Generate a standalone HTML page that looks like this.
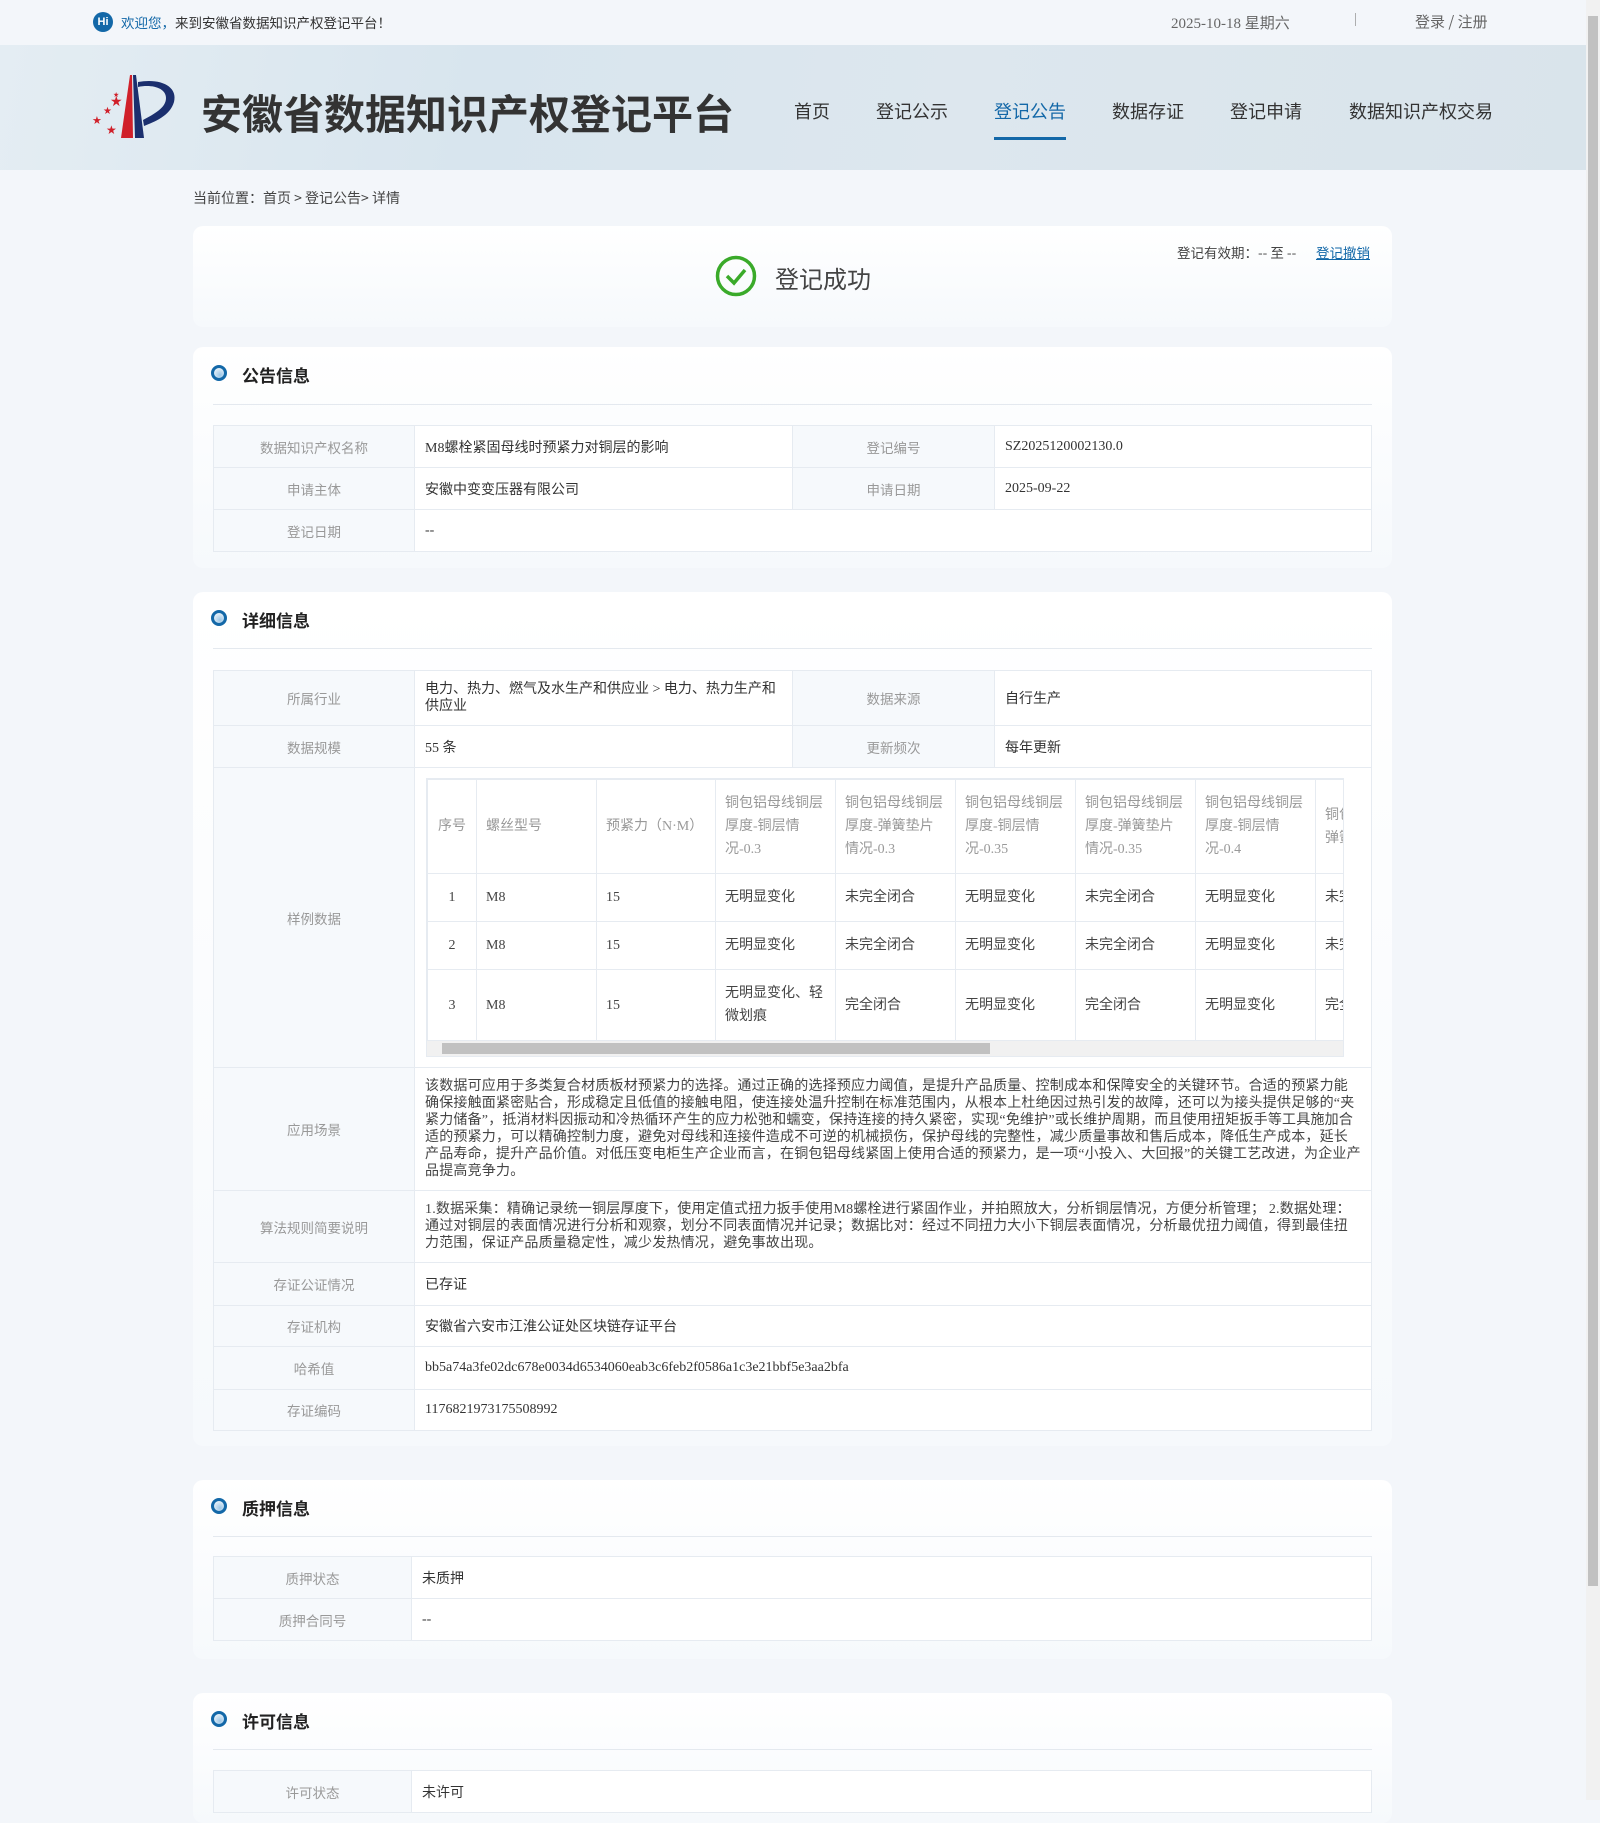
<!DOCTYPE html>
<html><head><meta charset="utf-8"><style>
*{margin:0;padding:0;box-sizing:border-box}
body{width:1600px;height:1800px;overflow:hidden;background:#f3f6fa;font-family:"Liberation Serif","Noto Sans CJK SC",sans-serif;color:#333;font-size:14px;position:relative}
.abs{position:absolute}
.top{left:0;top:0;width:1586px;height:45px;background:#f3f6fa}
.banner{left:0;top:45px;width:1586px;height:125px;background:linear-gradient(100deg,#e4edf3 0%,#d8e5ee 30%,#dde7ee 60%,#d9e4eb 100%)}
.sb{left:1586px;top:0;width:14px;height:1800px;background:#f1f1f1}
.sb i{position:absolute;left:2px;top:16px;width:10px;height:1570px;background:#c1c1c1}
.nav{top:98px;font-size:18px;color:#333;font-family:"Noto Sans CJK SC",sans-serif}
.card{left:193px;width:1199px;background:linear-gradient(#fff,#f6f9fc);border-radius:10px}
.st{left:213px;font-size:17px;font-weight:bold;color:#222;font-family:"Noto Sans CJK SC",sans-serif}
.dot{position:absolute;left:-2px;top:3px;width:16px;height:16px;border:3px solid #1368a8;border-radius:50%;background:radial-gradient(circle at 60% 70%,#9cc6e6,#fff)}
.st span{margin-left:29px}
.hr{left:213px;width:1159px;height:1px;background:#e4e9ef}
table{border-collapse:collapse;position:absolute;left:213px;width:1159px;background:#fff}
td{border:1px solid #e6ebf1;font-size:14px;color:#333;padding:0 10px;vertical-align:middle}
td.l{background:#f6f9fc;color:#999;text-align:center;font-family:"Noto Sans CJK SC",sans-serif;font-size:13.5px}
table.in{position:static;width:918px;table-layout:fixed}
table.in td{color:#444;padding:0 9px;line-height:23px}
table.in tr:first-child td{color:#999}
p.t{line-height:17px;font-size:14px;letter-spacing:0.2px;color:#444;padding:6px 0}
</style></head><body>
<div class="abs top"></div>
<div class="abs" style="left:93px;top:12px;width:20px;height:20px;border-radius:50%;background:#1368a8;color:#fff;font:bold 11px 'Liberation Sans';line-height:20px;text-align:center">Hi</div>
<div class="abs" style="left:121px;top:12px;font-size:13.5px;font-family:'Noto Sans CJK SC',sans-serif;color:#333"><span style="color:#1368a8">欢迎您，</span>来到安徽省数据知识产权登记平台！</div>
<div class="abs" style="left:1171px;top:12px;font-size:15px;color:#666">2025-10-18 星期六</div>
<div class="abs" style="left:1354px;top:11px;font-size:15px;color:#999">|</div>
<div class="abs" style="left:1415px;top:11px;font-size:15px;color:#666;font-family:'Noto Sans CJK SC',sans-serif">登录 / 注册</div>
<div class="abs banner"></div>
<svg class="abs" style="left:90px;top:70px" width="100" height="80" viewBox="0 0 100 80">
<path d="M40 5 L42 5 L43 68 L31 68 Z" fill="#d0202a"/>
<path d="M43 5 L46 5 L54 68 L45 68 Z" fill="#1b2f6e"/>
<path d="M48 12 C70 8 88 16 84 32 C80 46 64 52 54 56 L53 50 C64 44 76 38 76 28 C76 18 62 14 48 17 Z" fill="#1b2f6e"/>
<g fill="#d0202a" font-size="14" font-family="DejaVu Sans"><text x="20" y="36">★</text><text x="13" y="44" font-size="10">★</text><text x="2" y="54" font-size="11">★</text><text x="16" y="64" font-size="12">★</text><text x="23" y="27" font-size="7">★</text></g>
</svg>
<div class="abs" style="left:201px;top:86px;font-size:41px;font-weight:bold;color:#333;font-family:'Noto Sans CJK SC',sans-serif;letter-spacing:0;line-height:50px">安徽省数据知识产权登记平台</div>
<div class="abs nav" style="left:794px">首页</div>
<div class="abs nav" style="left:876px">登记公示</div>
<div class="abs nav" style="left:994px;color:#1368a8">登记公告</div>
<div class="abs" style="left:994px;top:137px;width:72px;height:3px;background:#1368a8"></div>
<div class="abs nav" style="left:1112px">数据存证</div>
<div class="abs nav" style="left:1230px">登记申请</div>
<div class="abs nav" style="left:1349px">数据知识产权交易</div>
<div class="abs sb"><i></i></div>
<div class="abs" style="left:193px;top:188px;font-size:14px;color:#444;font-family:'Noto Sans CJK SC',sans-serif">当前位置：首页 &gt; 登记公告&gt; 详情</div>

<div class="abs card" style="top:226px;height:101px"></div>
<svg class="abs" style="left:715px;top:255px" width="42" height="42"><circle cx="21" cy="21" r="18.5" fill="none" stroke="#3aaa2a" stroke-width="3.5"/><path d="M12 21 L19 28 L30 15" fill="none" stroke="#3aaa2a" stroke-width="3.5"/></svg>
<div class="abs" style="left:775px;top:260px;font-size:24px;color:#444;font-family:'Noto Sans CJK SC',sans-serif">登记成功</div>
<div class="abs" style="left:1177px;top:242px;font-size:13.5px;color:#444;font-family:'Noto Sans CJK SC',sans-serif">登记有效期：-- 至 --</div>
<div class="abs" style="left:1316px;top:242px;font-size:13.5px;color:#1368a8;text-decoration:underline;font-family:'Noto Sans CJK SC',sans-serif">登记撤销</div>

<div class="abs card" style="top:347px;height:221px"></div>
<div class="abs st" style="top:362px"><i class="dot"></i><span>公告信息</span></div>
<div class="abs hr" style="top:404px"></div>
<table style="top:425px">
<tr style="height:42px"><td class="l" style="width:201px">数据知识产权名称</td><td style="width:378px">M8螺栓紧固母线时预紧力对铜层的影响</td><td class="l" style="width:202px">登记编号</td><td>SZ2025120002130.0</td></tr>
<tr style="height:42px"><td class="l">申请主体</td><td>安徽中变变压器有限公司</td><td class="l">申请日期</td><td>2025-09-22</td></tr>
<tr style="height:42px"><td class="l">登记日期</td><td colspan="3">--</td></tr>
</table>

<div class="abs card" style="top:592px;height:854px"></div>
<div class="abs st" style="top:607px"><i class="dot"></i><span>详细信息</span></div>
<div class="abs hr" style="top:648px"></div>
<table style="top:670px">
<tr style="height:55px"><td class="l" style="width:201px">所属行业</td><td style="width:378px;line-height:17px">电力、热力、燃气及水生产和供应业 &gt; 电力、热力生产和供应业</td><td class="l" style="width:202px">数据来源</td><td>自行生产</td></tr>
<tr style="height:42px"><td class="l">数据规模</td><td>55 条</td><td class="l">更新频次</td><td>每年更新</td></tr>
<tr style="height:298px"><td class="l">样例数据</td><td colspan="3" style="padding:10px 10px 10px 11px"><div style="width:918px;overflow:hidden;border:1px solid #e6ebf1">
<table class="in" style="width:1050px"><colgroup><col style="width:49px"><col style="width:120px"><col style="width:119px"><col style="width:120px"><col style="width:120px"><col style="width:120px"><col style="width:120px"><col style="width:120px"><col style="width:162px"></colgroup>
<tr style="height:94px"><td style="text-align:center;padding:0">序号</td><td>螺丝型号</td><td>预紧力（N·M）</td><td>铜包铝母线铜层厚度-铜层情况-0.3</td><td>铜包铝母线铜层厚度-弹簧垫片情况-0.3</td><td>铜包铝母线铜层厚度-铜层情况-0.35</td><td>铜包铝母线铜层厚度-弹簧垫片情况-0.35</td><td>铜包铝母线铜层厚度-铜层情况-0.4</td><td>铜包铝母线铜层厚度-弹簧垫片情况-0.4</td></tr>
<tr style="height:48px"><td style="text-align:center;padding:0">1</td><td>M8</td><td>15</td><td>无明显变化</td><td>未完全闭合</td><td>无明显变化</td><td>未完全闭合</td><td>无明显变化</td><td>未完全闭合</td></tr>
<tr style="height:48px"><td style="text-align:center;padding:0">2</td><td>M8</td><td>15</td><td>无明显变化</td><td>未完全闭合</td><td>无明显变化</td><td>未完全闭合</td><td>无明显变化</td><td>未完全闭合</td></tr>
<tr style="height:71px"><td style="text-align:center;padding:0">3</td><td>M8</td><td>15</td><td>无明显变化、轻微划痕</td><td>完全闭合</td><td>无明显变化</td><td>完全闭合</td><td>无明显变化</td><td>完全闭合</td></tr>
</table>
<div style="height:15px;background:#f1f1f1;position:relative"><div style="position:absolute;left:15px;top:2px;width:548px;height:11px;background:#c1c1c1"></div></div>
</div></td></tr>
<tr style="height:123px"><td class="l">应用场景</td><td colspan="3"><p class="t">该数据可应用于多类复合材质板材预紧力的选择。通过正确的选择预应力阈值，是提升产品质量、控制成本和保障安全的关键环节。合适的预紧力能确保接触面紧密贴合，形成稳定且低值的接触电阻，使连接处温升控制在标准范围内，从根本上杜绝因过热引发的故障，还可以为接头提供足够的“夹紧力储备”，抵消材料因振动和冷热循环产生的应力松弛和蠕变，保持连接的持久紧密，实现“免维护”或长维护周期，而且使用扭矩扳手等工具施加合适的预紧力，可以精确控制力度，避免对母线和连接件造成不可逆的机械损伤，保护母线的完整性，减少质量事故和售后成本，降低生产成本，延长产品寿命，提升产品价值。对低压变电柜生产企业而言，在铜包铝母线紧固上使用合适的预紧力，是一项“小投入、大回报”的关键工艺改进，为企业产品提高竞争力。</p></td></tr>
<tr style="height:72px"><td class="l">算法规则简要说明</td><td colspan="3"><p class="t">1.数据采集：精确记录统一铜层厚度下，使用定值式扭力扳手使用M8螺栓进行紧固作业，并拍照放大，分析铜层情况，方便分析管理； 2.数据处理：通过对铜层的表面情况进行分析和观察，划分不同表面情况并记录；数据比对：经过不同扭力大小下铜层表面情况，分析最优扭力阈值，得到最佳扭力范围，保证产品质量稳定性，减少发热情况，避免事故出现。</p></td></tr>
<tr style="height:43px"><td class="l">存证公证情况</td><td colspan="3">已存证</td></tr>
<tr style="height:41px"><td class="l">存证机构</td><td colspan="3">安徽省六安市江淮公证处区块链存证平台</td></tr>
<tr style="height:43px"><td class="l">哈希值</td><td colspan="3">bb5a74a3fe02dc678e0034d6534060eab3c6feb2f0586a1c3e21bbf5e3aa2bfa</td></tr>
<tr style="height:41px"><td class="l">存证编码</td><td colspan="3">1176821973175508992</td></tr>
</table>

<div class="abs card" style="top:1480px;height:179px"></div>
<div class="abs st" style="top:1495px"><i class="dot"></i><span>质押信息</span></div>
<div class="abs hr" style="top:1536px"></div>
<table style="top:1556px">
<tr style="height:42px"><td class="l" style="width:198px">质押状态</td><td>未质押</td></tr>
<tr style="height:42px"><td class="l">质押合同号</td><td>--</td></tr>
</table>

<div class="abs card" style="top:1693px;height:130px"></div>
<div class="abs st" style="top:1708px"><i class="dot"></i><span>许可信息</span></div>
<div class="abs hr" style="top:1749px"></div>
<table style="top:1770px">
<tr style="height:42px"><td class="l" style="width:198px">许可状态</td><td>未许可</td></tr>
</table>
</body></html>
